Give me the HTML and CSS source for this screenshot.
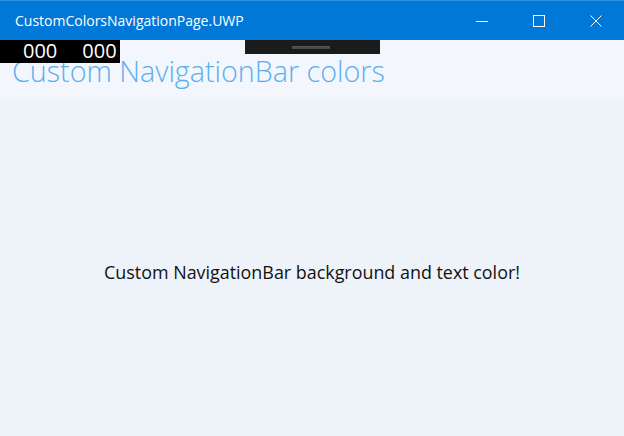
FILE: index.html
```html
<!DOCTYPE html>
<html>
<head>
<meta charset="utf-8">
<link rel="stylesheet" href="styles.css">
</head>
<body>
<div class="window">
  <header class="titlebar">
    <span class="apptitle">CustomColorsNavigationPage.UWP</span>
    <div class="caption">
      <span class="cbtn"><svg width="12" height="12" viewBox="0 0 12 12"><path d="M0 6.5H12" stroke="#fff" stroke-width="1"/></svg></span>
      <span class="cbtn"><svg width="12" height="12" viewBox="0 0 12 12"><rect x="0.5" y="0.5" width="11" height="11" fill="none" stroke="#fff" stroke-width="1"/></svg></span>
      <span class="cbtn"><svg width="12" height="12" viewBox="0 0 12 12"><path d="M0.5 0.5L11.5 11.5M11.5 0.5L0.5 11.5" stroke="#fff" stroke-width="1"/></svg></span>
    </div>
  </header>
  <div class="navbar">
    <div class="counter"><span>000</span><span>000</span></div>
    <div class="grip"><span class="gripline"></span></div>
    <h1 class="navtitle">Custom NavigationBar colors</h1>
  </div>
  <main class="content">
    <p class="message">Custom NavigationBar background and text color!</p>
  </main>
</div>
</body>
</html>
```
FILE: styles.css
```css
* { box-sizing: border-box; }
html, body { margin: 0; padding: 0; }
body { width: 624px; height: 436px; overflow: hidden; font-family: "Open Sans", "Noto Sans", sans-serif; }
.window { display: flex; flex-direction: column; height: 436px; }
.titlebar {
  height: 40px; background: #0078d7; border-top: 1px solid #2a8ee0;
  display: flex; align-items: center; justify-content: space-between; color: #fff;
}
.apptitle { font-size: 14px; padding-left: 15px; margin-top: -1px; }
.caption { display: flex; height: 100%; }
.cbtn { width: 57px; display: flex; align-items: center; justify-content: center; }
.navbar { position: relative; height: 60px; background: #f3f6fc; }
.counter {
  position: absolute; left: 0; top: 0; width: 120px; height: 23px; background: #000;
  color: #fff; font-size: 20px; line-height: 22px; display: flex; gap: 25px; padding-left: 23px;
  z-index: 1;
}
.grip {
  position: absolute; left: 245px; top: 0; width: 135px; height: 14px; background: #1b1b1b;
  display: flex; justify-content: center; align-items: center;
}
.gripline { width: 38px; height: 3px; background: #4a4a4a; border-top: 1px solid #555; margin-left: -3px; }
.navtitle {
  margin: 0; padding: 12px 0 0 12px; font-weight: 300; font-size: 28.7px; color: #5aaff0; line-height: 38px;
}
.content { flex: 1; background: #eef2f9; display: flex; align-items: center; justify-content: center; }
.message { margin: 0; font-size: 17.9px; color: #111; transform: translateY(4px); }
```
